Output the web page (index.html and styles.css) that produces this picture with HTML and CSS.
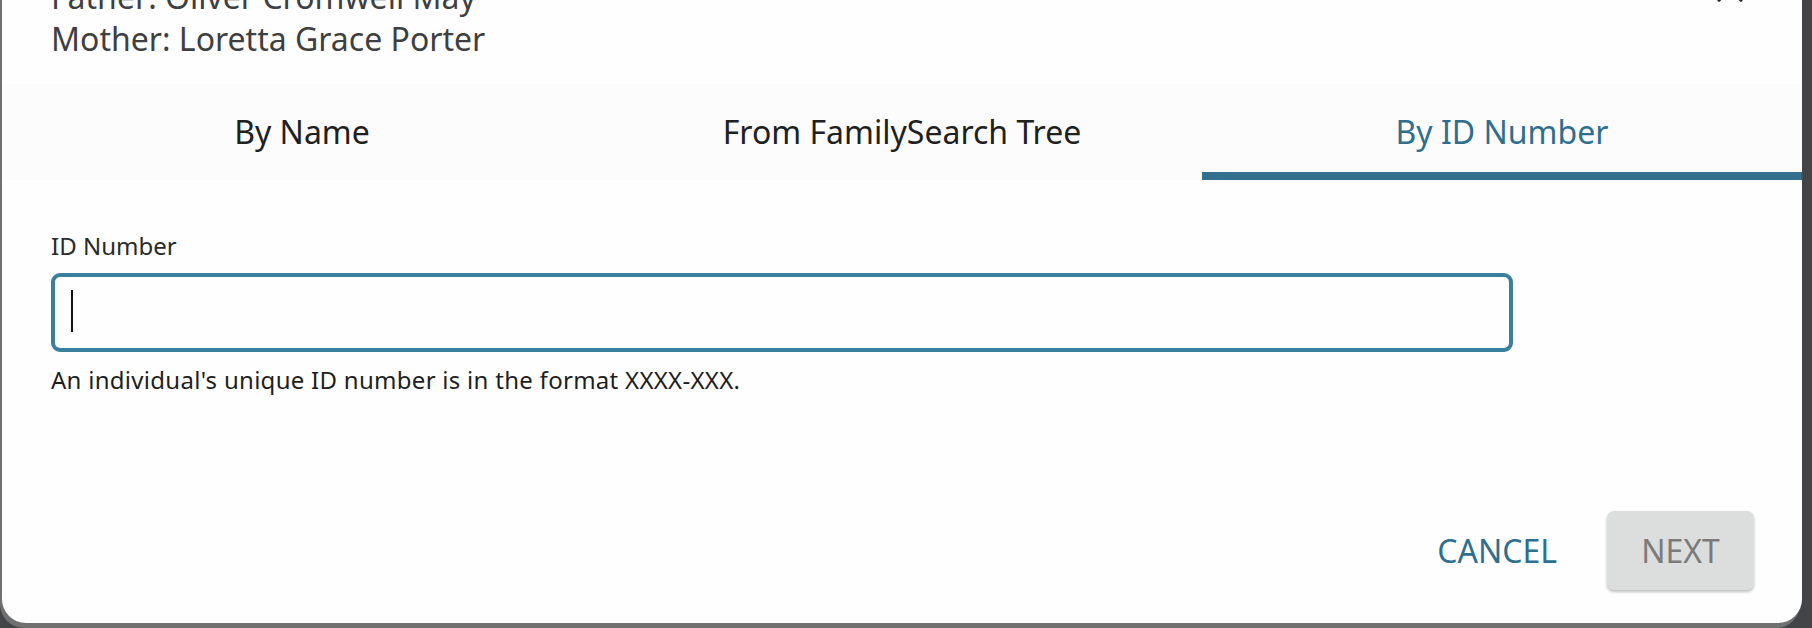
FILE: index.html
```html
<!DOCTYPE html>
<html lang="en">
<head>
<meta charset="utf-8">
<title>Add Person</title>
<link rel="stylesheet" href="styles.css">
</head>
<body>
<div class="dialog">
  <button class="close" aria-label="Close">
    <svg width="26" height="26" viewBox="0 0 26 26"><path d="M2 2 L24 24 M24 2 L2 24" stroke="#222" stroke-width="3.2" stroke-linecap="round" fill="none"/></svg>
  </button>
  <div class="header">
    <div class="parent">Father: Oliver Cromwell May</div>
    <div class="parent">Mother: Loretta Grace Porter</div>
  </div>
  <div class="tabs">
    <div class="tab">By Name</div>
    <div class="tab">From FamilySearch Tree</div>
    <div class="tab active">By ID Number</div>
  </div>
  <div class="content">
    <label class="label" for="pid">ID Number</label>
    <div class="field">
      <input id="pid" class="input" type="text">
      <span class="caret"></span>
    </div>
    <div class="help">An individual's unique ID number is in the format XXXX-XXX.</div>
  </div>
  <div class="actions">
    <button class="btn-text">CANCEL</button>
    <button class="btn-next" disabled>NEXT</button>
  </div>
</div>
</body>
</html>
```
FILE: styles.css
```css
html, body {
  margin: 0;
  padding: 0;
  height: 100%;
  overflow: hidden;
}
body {
  background: #434447;
  font-family: "Noto Sans", "Open Sans", sans-serif;
}
.dialog {
  position: relative;
  width: 1800px;
  margin-left: 2px;
  margin-top: -24px;
  background: #fefefe;
  border-radius: 0 0 24px 24px;
  box-shadow: -2px 5px 0 0 #707070;
  display: flex;
  flex-direction: column;
}
.close {
  position: absolute;
  left: 1715px;
  top: 0;
  padding: 0;
  border: 0;
  background: none;
  line-height: 0;
}
.header {
  padding: 0 49px;
  color: #3f3f41;
  font-size: 32px;
  line-height: 42px;
}
.tabs {
  margin-top: 24px;
  display: grid;
  grid-template-columns: 1fr 1fr 1fr;
  background: #fcfcfc;
}
.tab {
  height: 96px;
  box-sizing: border-box;
  padding-top: 26px;
  text-align: center;
  font-size: 32px;
  line-height: 44px;
  color: #202020;
}
.tab.active {
  color: #2f6e8e;
  border-bottom: 8px solid #336f8e;
}
.content {
  padding: 50px 49px 0;
  display: flex;
  flex-direction: column;
}
.label {
  font-size: 24px;
  line-height: 32px;
  color: #2a2a2a;
}
.field {
  position: relative;
  margin-top: 11px;
  width: 1462px;
}
.input {
  display: block;
  width: 100%;
  height: 79px;
  box-sizing: border-box;
  border: 4px solid #3a809e;
  border-radius: 9px;
  background: #fefefe;
  outline: none;
  caret-color: transparent;
  font-family: inherit;
  font-size: 28px;
  padding: 0 17px;
}
.caret {
  position: absolute;
  left: 20px;
  top: 17px;
  width: 2px;
  height: 42px;
  background: #111;
}
.help {
  margin-top: 12px;
  font-size: 24px;
  line-height: 32px;
  letter-spacing: 0.28px;
  color: #1e1e1e;
}
.actions {
  display: flex;
  justify-content: flex-end;
  align-items: center;
  gap: 50px;
  padding: 115px 48px 33px 0;
}
.btn-text {
  border: 0;
  background: none;
  padding: 0;
  font-family: inherit;
  font-size: 32px;
  line-height: 44px;
  color: #2e6e8e;
}
.btn-next {
  width: 147px;
  height: 79px;
  border: 0;
  border-radius: 7px;
  background: #dcdddd;
  box-shadow: 0 2px 3px rgba(0,0,0,0.25);
  font-family: inherit;
  font-size: 32px;
  color: #7b7b7b;
  padding: 0;
}
```
